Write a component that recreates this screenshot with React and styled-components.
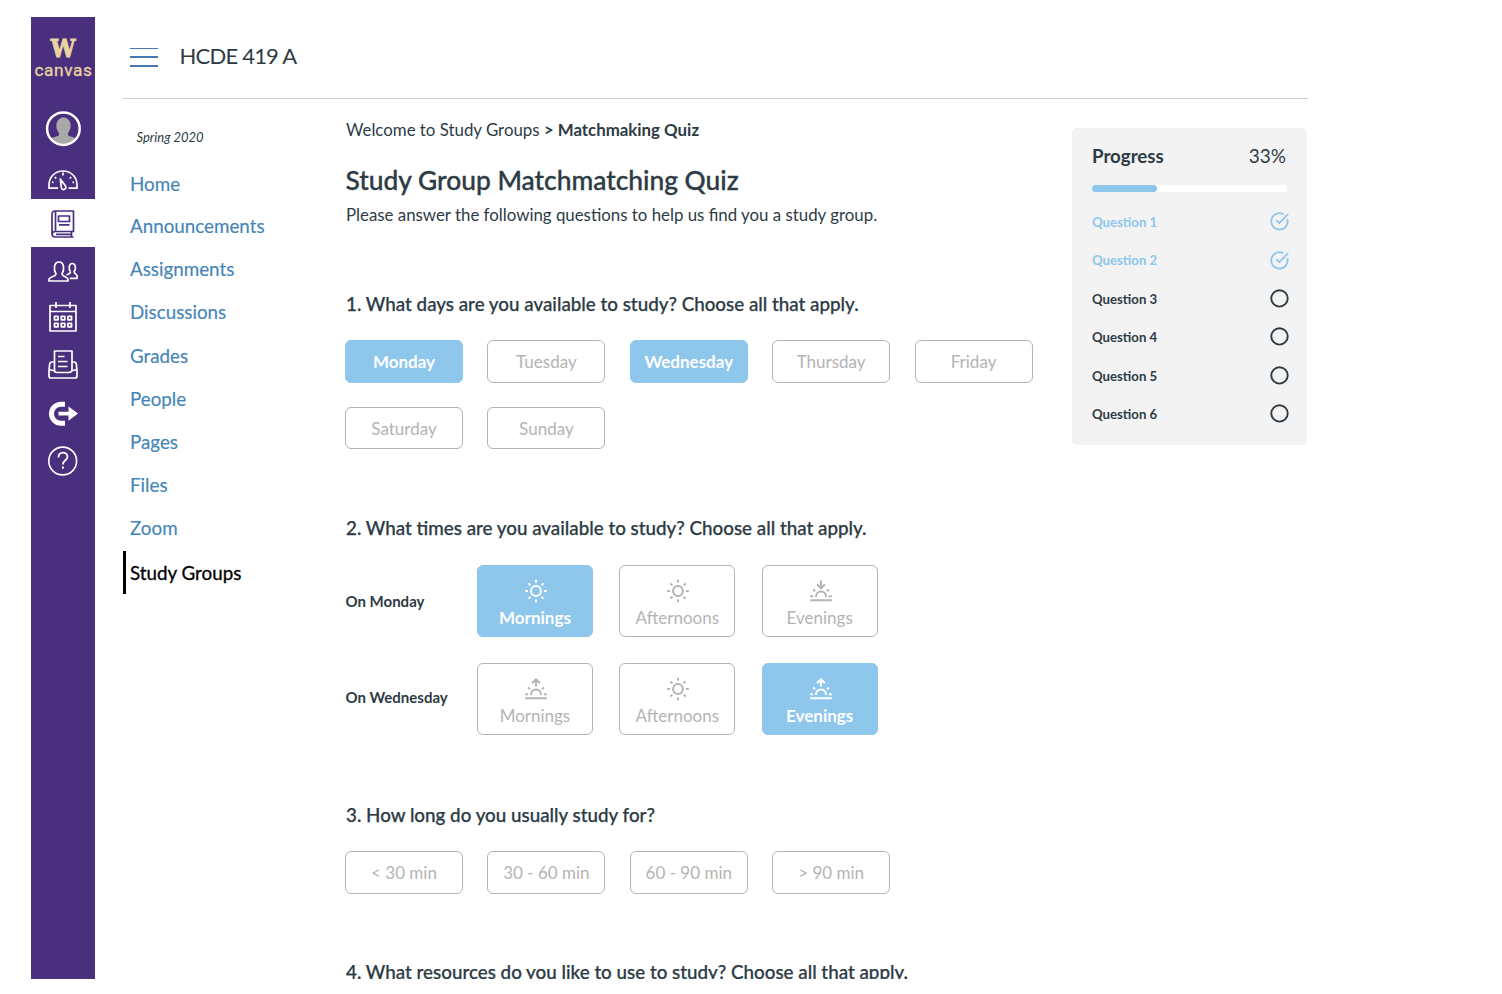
import React from "react";
import styled, { createGlobalStyle } from "styled-components";

const color = {
  purple: "#492f7d",
  gold: "#e8d3a2",
  ink: "#2d3b45",
  link: "#4485b8",
  blue: "#8ec6ec",
  grey: "#b4b4b4",
  panel: "#f3f3f3",
};

const GlobalStyle = createGlobalStyle`
  * { box-sizing: border-box; }
  body { margin: 0; background: #fff; font-family: Lato, "Liberation Sans", sans-serif; color: ${color.ink}; }
  h1, h2, p, ul { margin: 0; padding: 0; }
  ul { list-style: none; }
  svg { display: block; flex: none; }
`;

const Page = styled.div`
  display: flex;
  height: 962px;
  margin: 17px 0 15px 31px;
  overflow: hidden;
`;

const Sidebar = styled.nav`
  flex: none;
  width: 64px;
  background: ${color.purple};
`;

const Brand = styled.div`
  height: 87px;
  padding-top: 19px;
  color: ${color.gold};
  text-align: center;
`;

const BrandLetter = styled.div`
  font: bold 22px/26px "DejaVu Serif", serif;
  -webkit-text-stroke: 1px ${color.gold};
  transform: scaleY(1.06);
`;

const BrandName = styled.div`
  font: 400 17.3px/20px Roboto, sans-serif;
  -webkit-text-stroke: 0.3px ${color.gold};
  letter-spacing: 0.6px;
  margin: -2px -4px 0 -3px;
`;

const SideItem = styled.a`
  display: flex;
  justify-content: center;
  height: ${(p) => p.$height}px;
  padding-top: ${(p) => p.$top}px;
  color: ${(p) => (p.$active ? color.purple : "#fff")};
  background: ${(p) => (p.$active ? "#fff" : "transparent")};
`;

const Main = styled.div`
  flex: none;
  width: 1185px;
  margin-left: 28px;
`;

const Header = styled.header`
  display: flex;
  height: 82px;
  padding: 0 0 3px 7px;
  align-items: center;
  gap: 21.5px;
  border-bottom: 1px solid #c7cdd1;
`;

const Burger = styled.div`
  width: 28px;
  height: 19px;
  margin-top: 2px;
  display: flex;
  flex-direction: column;
  justify-content: space-between;
`;

const BurgerLine = styled.span`
  height: ${(p) => (p.$thin ? 1 : 2)}px;
  background: #4678b2;
`;

const CourseName = styled.div`
  font-size: 22px;
  font-weight: 400;
  line-height: 28px;
  letter-spacing: -0.78px;
`;

const Body = styled.div`
  display: flex;
`;

const CourseNav = styled.nav`
  flex: none;
  width: 222px;
  padding-top: 25px;
`;

const Term = styled.div`
  padding-left: 13.5px;
  font-size: 13px;
  font-style: italic;
  line-height: 26px;
  margin-bottom: 12px;
`;

const NavLink = styled.a`
  display: block;
  height: 43.15px;
  padding-left: ${(p) => (p.$active ? 4 : 7)}px;
  border-left: ${(p) => (p.$active ? "3px solid #000" : "0")};
  color: ${(p) => (p.$active ? "#000" : color.link)};
  font-size: 18.8px;
  line-height: 43px;
  -webkit-text-stroke: ${(p) => (p.$active ? "0.3px #000" : "0.15px " + color.link)};
  &:first-child { margin-bottom: -1px; }
  &:last-child { margin-top: 2px; }
`;

const Content = styled.main`
  flex: none;
  width: 727px;
  padding-top: 20px;
`;

const Breadcrumb = styled.p`
  padding-left: 1px;
  font-size: 16.85px;
  line-height: 22px;
  b { font-weight: 700; }
`;

const Title = styled.h1`
  padding-left: 0.5px;
  margin-top: 22px;
  font-size: 26.37px;
  font-weight: 500;
  line-height: 34px;
  -webkit-text-stroke: 0.35px ${color.ink};
`;

const Intro = styled.p`
  padding-left: 1px;
  margin: 7px 0 66px;
  font-size: 16.85px;
  line-height: 22px;
`;

const Question = styled.section`
  height: ${(p) => p.$height}px;
`;

const Prompt = styled.h2`
  padding-left: 1px;
  font-size: 18.8px;
  font-weight: 500;
  line-height: 24px;
  margin-bottom: ${(p) => p.$gap || 24}px;
  -webkit-text-stroke: 0.25px ${color.ink};
`;

const Choices = styled.div`
  display: grid;
  grid-template-columns: repeat(5, 118px);
  gap: 24px 24.4px;
`;

const Choice = styled.button`
  height: 42.5px;
  padding: 1px 0 0;
  border: 1px solid ${(p) => (p.$on ? color.blue : color.grey)};
  border-radius: 6px;
  background: ${(p) => (p.$on ? color.blue : "#fff")};
  color: ${(p) => (p.$on ? "#fff" : color.grey)};
  font-family: inherit;
  font-size: 17px;
  font-weight: ${(p) => (p.$on ? 700 : 400)};
  white-space: nowrap;
`;

const TimeRow = styled.div`
  display: grid;
  grid-template-columns: 105.7px repeat(3, 116.3px);
  column-gap: 26.1px;
  height: 98px;
`;

const DayLabel = styled.div`
  padding-left: 0.5px;
  padding-top: ${(p) => p.$top}px;
  font-size: 15px;
  font-weight: 700;
  line-height: 20px;
  white-space: nowrap;
`;

const TimeChoice = styled(Choice)`
  display: flex;
  flex-direction: column;
  align-items: center;
  height: 72px;
  padding: 13px 0 0;
  line-height: 22px;
  svg { margin: 0 0 4px 2px; }
`;

const Progress = styled.aside`
  flex: none;
  width: 235px;
  height: 317px;
  margin-top: 29px;
  padding: 16px 18px 0 20px;
  border-radius: 5px;
  background: ${color.panel};
`;

const ProgressHead = styled.div`
  display: flex;
  justify-content: space-between;
  padding-right: 3px;
  font-size: 19px;
  line-height: 24px;
  b { font-size: 18.7px; font-weight: 700; }
`;

const Track = styled.div`
  width: 195px;
  height: 7px;
  margin: 17px 0 10px;
  border-radius: 4px;
  background: #fff;
`;

const Fill = styled.div`
  height: 7px;
  border-radius: 4px;
  background: ${color.blue};
`;

const Step = styled.li`
  display: flex;
  align-items: center;
  justify-content: space-between;
  height: 38.4px;
  color: ${(p) => (p.$done ? color.blue : color.ink)};
  font-size: 13.2px;
  font-weight: 700;
  span { padding-top: 1.5px; }
`;

const Stroke = ({ w, h, sw = 1.7, children }) => (
  <svg width={w} height={h} viewBox={`0 0 ${w} ${h}`} fill="none" stroke="currentColor" strokeWidth={sw} strokeLinejoin="round">
    {children}
  </svg>
);

const Avatar = () => (
  <svg width="36" height="36" viewBox="0 0 36 36">
    <clipPath id="face"><circle cx="18.4" cy="17.7" r="16" /></clipPath>
    <g clipPath="url(#face)" fill="#a9a9a9">
      <ellipse cx="18.5" cy="15" rx="7.2" ry="8.8" />
      <path d="M14 20h9v4c1 2 9 2 11 6v6H3v-6c2-4 10-4 11-6z" />
    </g>
    <circle cx="18.4" cy="17.7" r="16.3" fill="none" stroke="#fff" strokeWidth="2.5" />
  </svg>
);

const Gauge = () => (
  <Stroke w={30} h={21} sw={1.7}>
    <path d="M10 18.2H1V15C1 7 7 1 15 1s14 6 14 14v3.2h-8.5M15 2.5v3M6.800 7l1.500 1.500M23.200 7l-1.500 1.500M4 12l1.500.6M26 12l-1.500.6" />
    <path d="M12.300 9l1 8.500a2.300 2.300 0 1 0 4-1.800z" />
  </Stroke>
);

const Book = () => (
  <Stroke w={24} h={28} sw={1.7}>
    <path d="M4.500 1H22.500v20.500H4.500c-4.500 0-4.500 5.500 0 5.500H22.500M20.500 21.500V27M1 24V4.500C1 2 2.500 1 4.500 1v20.500M5 24.300h15" />
    <path d="M7.500 6h11v5.500h-11zM8 14.800h10.500" />
  </Stroke>
);

const People = () => (
  <Stroke w={30} h={22} sw={1.7}>
    <path d="M1 20v-1.500c0-2.800 6.500-2.600 7-5.400C5.500 9.500 5.500 1 11 1s5.500 8.500 3 12.100c.5 2.800 6 2.600 6 5.400V20z" />
    <path d="M22.500 10.800C20.300 8 20.800 2.500 24.300 2.500s4 5.500 1.800 8.300c.3 2.400 3 2.200 3 4.200v2.300h-7.500M22.500 10.800c-.2 1.900-1.800 2.200-4 3.200" />
  </Stroke>
);

const Calendar = () => (
  <Stroke w={28} h={30} sw={1.7}>
    <path d="M1 3.500h26V29H1zM1 9.500h26M7 0v6M21 0v6" />
    <path strokeWidth="1.8" d="M5.500 14.300H9v3.500H5.500zM12.300 14.300h3.500v3.500h-3.500zM19 14.300h3.500v3.500H19zM5.500 21.300H9v3.500H5.500zM12.300 21.300h3.500v3.500h-3.500zM19 21.300h3.500v3.500H19z" />
  </Stroke>
);

const Inbox = () => (
  <Stroke w={30} h={30} sw={1.7}>
    <path d="M6.500 21V1h17.500v20M10 6.500h6.500M10 11.500h9.500M10 16.500h9.500" />
    <path d="M6.500 12H4Q2 12 1.700 14L1 20v6q0 2 2 2h24q2 0 2-2v-6l-.7-6Q28 12 26 12h-2M1 19.500l5 1.300c1 1.700 2 1.700 3 1.700h12c1 0 2 0 3-1.700l5-1.300" />
  </Stroke>
);

const Exit = () => (
  <svg width="30" height="26" viewBox="0 0 30 26">
    <path d="M17 3.200h-4a9.500 9.500 0 0 0 0 19.100h4" fill="none" stroke="#fff" strokeWidth="5" />
    <path d="M10.500 10.700h10V5.500L30 12.500l-9.500 7.200v-5.300h-10z" fill="#fff" />
  </svg>
);

const Help = () => (
  <Stroke w={30} h={30} sw={1.6}>
    <circle cx="14.7" cy="15" r="13.9" />
    <path d="M10.500 11.500c0-6.500 9-6.200 9-.8 0 3.800-4.600 3.300-4.600 7.800M14.900 20.500v2.300" strokeWidth="1.8" />
  </Stroke>
);

const Sun = () => (
  <Stroke w={24} h={24} sw={2}>
    <circle cx="12" cy="12" r="4.9" />
    <path d="M12 .8v2.800M12 20.400v2.800M1.200 12h2.800M20 12h2.800M4.400 4.400l2 2M17.600 17.600l2 2M4.400 19.600l2-2M17.600 6.400l2-2" />
  </Stroke>
);

const Horizon = ({ up }) => (
  <Stroke w={24} h={24} sw={2}>
    <path d="M1.200 21.200h21.600M1.200 17.200h3M19.800 17.200h3M7 18v-.5a5 5 0 0 1 10 0v.5M4.200 10.500l1.800 1.800M19.800 10.500l-1.800 1.800" />
    <path d={up ? "M12 9.500V2.500M8 6.200l4-4 4 4" : "M12 1.500V9M8 5.200l4 4 4-4"} />
  </Stroke>
);

const Check = () => (
  <Stroke w={20} h={20} sw={1.8}>
    <path d="M18.500 8.800A8.200 8.200 0 1 1 13.800 2.900M7.800 9.700l2.500 2.500 8.300-8.500" strokeLinecap="round" />
  </Stroke>
);

const Ring = () => (
  <Stroke w={20} h={20} sw={1.9}><circle cx="10.5" cy="10.4" r="8.2" /></Stroke>
);

const sideItems = [
  { name: "Account", Icon: Avatar, height: 49, top: 7 },
  { name: "Dashboard", Icon: Gauge, height: 46, top: 17 },
  { name: "Courses", Icon: Book, height: 48, top: 11 },
  { name: "Groups", Icon: People, height: 48, top: 14 },
  { name: "Calendar", Icon: Calendar, height: 46, top: 7 },
  { name: "Inbox", Icon: Inbox, height: 48, top: 9 },
  { name: "Commons", Icon: Exit, height: 49, top: 12 },
  { name: "Help", Icon: Help, height: 48, top: 8 },
];
const links = ["Home", "Announcements", "Assignments", "Discussions", "Grades", "People", "Pages", "Files", "Zoom", "Study Groups"];
const days = ["Monday", "Tuesday", "Wednesday", "Thursday", "Friday", "Saturday", "Sunday"];
const lengths = ["< 30 min", "30 - 60 min", "60 - 90 min", "> 90 min"];
const sun = <Sun />;
const down = <Horizon />;
const up = <Horizon up />;
const times = [
  { day: "On Monday", top: 26, on: "Mornings", icons: [sun, sun, down] },
  { day: "On Wednesday", top: 24, on: "Evenings", icons: [up, sun, up] },
];

export default function App() {
  return (
    <>
      <GlobalStyle />
      <Page>
        <Sidebar>
          <Brand>
            <BrandLetter>W</BrandLetter>
            <BrandName>canvas</BrandName>
          </Brand>
          {sideItems.map(({ name, Icon, height, top }) => (
            <SideItem key={name} $height={height} $top={top} $active={name === "Courses"}><Icon /></SideItem>
          ))}
        </Sidebar>
        <Main>
          <Header>
            <Burger><BurgerLine $thin /><BurgerLine /><BurgerLine /></Burger>
            <CourseName>HCDE 419 A</CourseName>
          </Header>
          <Body>
            <CourseNav>
              <Term>Spring 2020</Term>
              <div>
                {links.map((l) => <NavLink key={l} $active={l === "Study Groups"}>{l}</NavLink>)}
              </div>
            </CourseNav>
            <Content>
              <Breadcrumb>Welcome to Study Groups <b>&gt; Matchmaking Quiz</b></Breadcrumb>
              <Title>Study Group Matchmatching Quiz</Title>
              <Intro>Please answer the following questions to help us find you a study group.</Intro>
              <Question $height={224}>
                <Prompt>1. What days are you available to study? Choose all that apply.</Prompt>
                <Choices>
                  {days.map((d) => <Choice key={d} $on={d === "Monday" || d === "Wednesday"}>{d}</Choice>)}
                </Choices>
              </Question>
              <Question $height={287}>
                <Prompt $gap={25}>2. What times are you available to study? Choose all that apply.</Prompt>
                {times.map((t) => (
                  <TimeRow key={t.day}>
                    <DayLabel $top={t.top}>{t.day}</DayLabel>
                    {["Mornings", "Afternoons", "Evenings"].map((n, i) => (
                      <TimeChoice key={n} $on={t.on === n}>{t.icons[i]}{n}</TimeChoice>
                    ))}
                  </TimeRow>
                ))}
              </Question>
              <Question $height={157}>
                <Prompt>3. How long do you usually study for?</Prompt>
                <Choices>{lengths.map((l) => <Choice key={l}>{l}</Choice>)}</Choices>
              </Question>
              <Prompt>4. What resources do you like to use to study? Choose all that apply.</Prompt>
            </Content>
            <Progress>
              <ProgressHead><b>Progress</b><span>33%</span></ProgressHead>
              <Track><Fill style={{ width: `${(2 / 6) * 100}%` }} /></Track>
              <ul>
                {[1, 2, 3, 4, 5, 6].map((n) => (
                  <Step key={n} $done={n < 3}><span>Question {n}</span>{n < 3 ? <Check /> : <Ring />}</Step>
                ))}
              </ul>
            </Progress>
          </Body>
        </Main>
      </Page>
    </>
  );
}
